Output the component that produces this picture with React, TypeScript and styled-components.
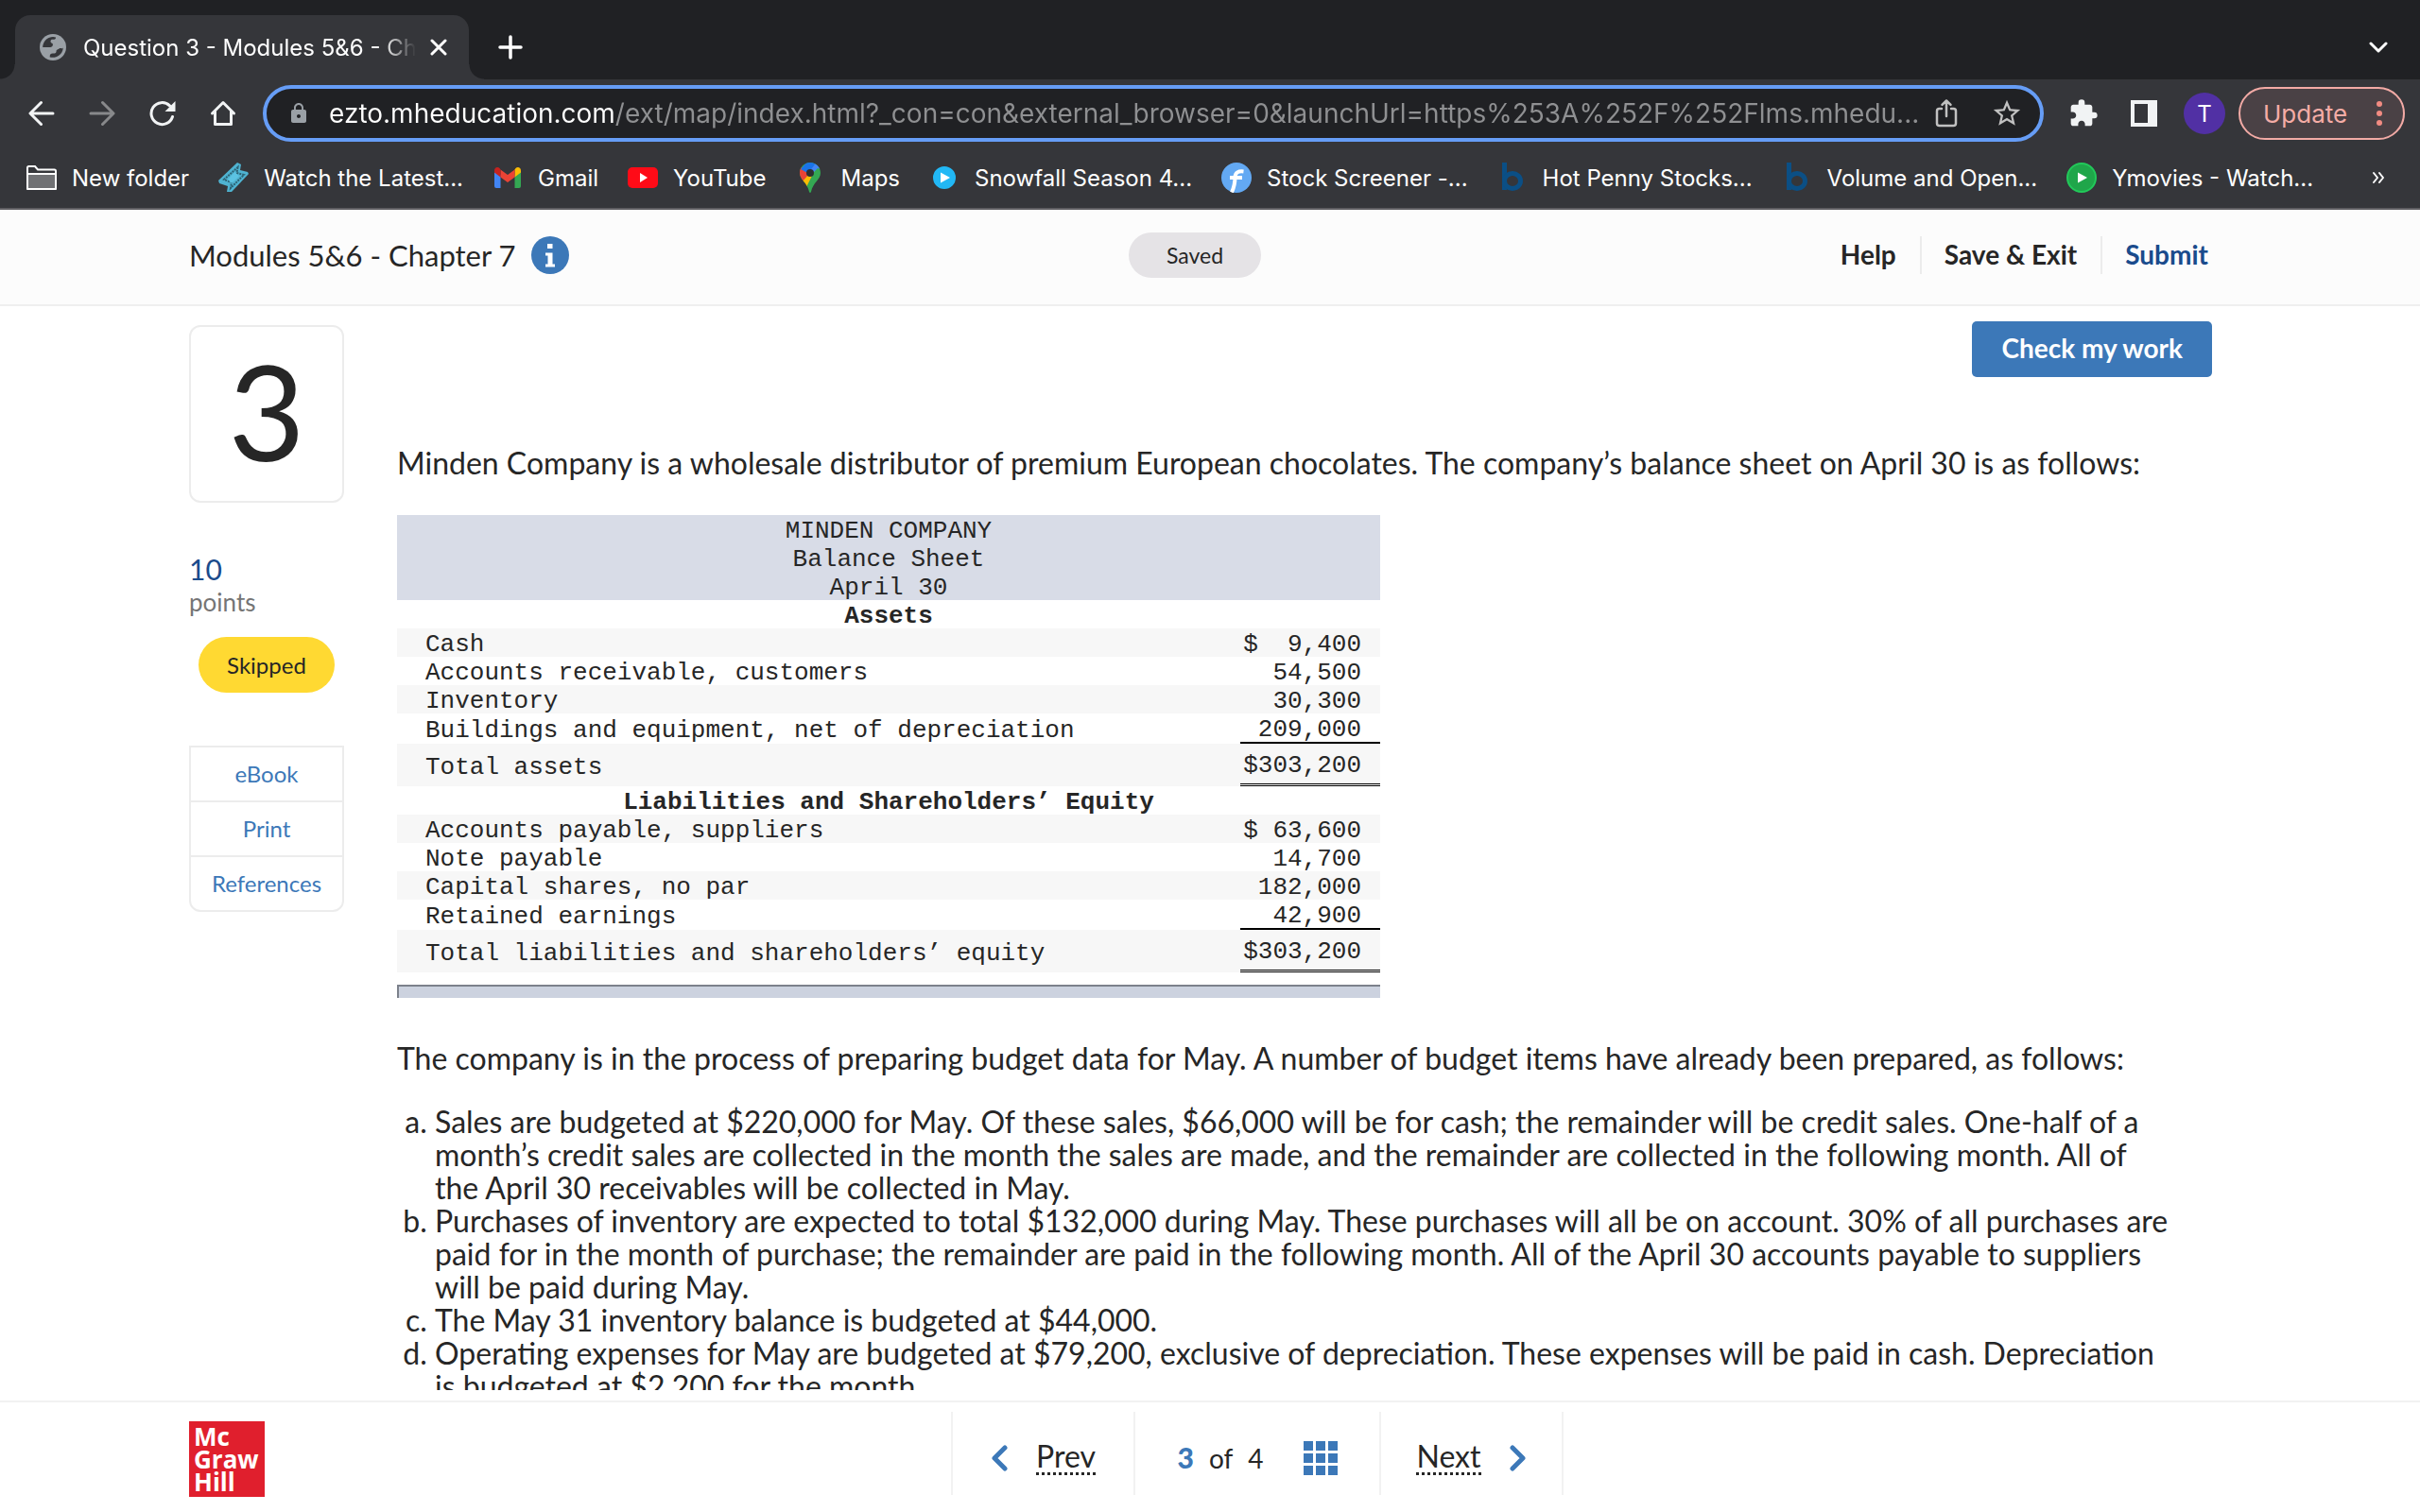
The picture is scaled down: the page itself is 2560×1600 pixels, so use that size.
import React from 'react';
import styled, { createGlobalStyle } from 'styled-components';
import { MdExtension, MdLock, MdStarBorder } from 'react-icons/md';

const UI_FONT = `Inter, 'Liberation Sans', sans-serif`;
const BODY_FONT = `Lato, 'Open Sans', sans-serif`;
const MONO_FONT = `'Liberation Mono', monospace`;

const color = {
  strip: '#202124',
  toolbar: '#35363a',
  ink: '#262626',
  blue: '#3c78b8',
  navy: '#1a4b8c',
  line: '#ececec',
};

const GlobalStyle = createGlobalStyle`
  * { box-sizing: border-box; }
  body { margin: 0; background: #fff; }
  button, input { font: inherit; color: inherit; border: 0; padding: 0; background: none; cursor: pointer; }
  a { color: inherit; text-decoration: none; }
  svg { display: block; flex: none; }
`;

const Page = styled.div`
  display: flex;
  flex-direction: column;
  height: 100vh;
  overflow: hidden;
  font-family: ${BODY_FONT};
  color: ${color.ink};
`;

/* ---------- browser chrome ---------- */

const Chrome = styled.header`
  flex: none;
  font-family: ${UI_FONT};
  font-size: 24px;
  color: #fff;
  background: ${color.toolbar};
  border-bottom: 2px solid #5f5e62;
`;

const TabStrip = styled.div`
  display: flex;
  align-items: flex-end;
  height: 84px;
  padding: 0 24px 0 16px;
  background: ${color.strip};
`;

const Tab = styled.div`
  position: relative;
  display: flex;
  align-items: center;
  width: 480px;
  height: 68px;
  padding: 0 23px 0 26px;
  border-radius: 16px 16px 0 0;
  background: ${color.toolbar};
  &::before,
  &::after {
    content: '';
    position: absolute;
    bottom: 0;
    width: 16px;
    height: 16px;
  }
  &::before {
    left: -16px;
    background: radial-gradient(circle at 0 0, transparent 15px, ${color.toolbar} 16px);
  }
  &::after {
    right: -16px;
    background: radial-gradient(circle at 100% 0, transparent 15px, ${color.toolbar} 16px);
  }
`;

const TabTitle = styled.span`
  flex: 1;
  margin: 0 15px 0 18px;
  overflow: hidden;
  white-space: nowrap;
  mask-image: linear-gradient(to right, #000 90%, transparent 100%);
`;

const StripButton = styled.button`
  display: flex;
  align-items: center;
  justify-content: center;
  height: 68px;
  width: ${(p) => p.$width}px;
`;

const Spacer = styled.div`
  flex: 1;
`;

const Toolbar = styled.div`
  display: flex;
  align-items: center;
  height: 72px;
  padding: 0 16px 0 20px;
`;

const NavButtons = styled.nav`
  display: flex;
  gap: 16px;
  margin-right: 18px;
`;

const IconButton = styled.button`
  display: flex;
  align-items: center;
  justify-content: center;
  width: 48px;
  height: 48px;
  color: ${(p) => (p.$muted ? '#88898b' : '#f1f3f4')};
`;

const AddressBar = styled.div`
  display: flex;
  flex: 1;
  align-items: center;
  gap: 8px;
  height: 60px;
  padding: 0 18px 0 22px;
  border: 4px solid #669df6;
  border-radius: 30px;
  background: ${color.strip};
  color: #9aa0a6;
`;

const Address = styled.input`
  flex: 1;
  min-width: 0;
  height: 40px;
  margin-left: 12px;
  font-size: 28px;
  color: transparent;
  background: linear-gradient(to right, #fff 303px, #8f9092 303px);
  background-clip: text;
  -webkit-background-clip: text;
  outline: none;
  cursor: text;
`;

const AddressActions = styled.div`
  display: flex;
  gap: 30px;
  color: #c1c1c1;
`;

const SmallButton = styled.button`
  display: flex;
  align-items: center;
  justify-content: center;
  width: 34px;
  height: 40px;
`;

const Extensions = styled.div`
  display: flex;
  align-items: center;
  gap: 16px;
  margin: 0 14px 0 18px;
`;

const Avatar = styled.button`
  width: 44px;
  height: 44px;
  margin-left: 2px;
  border-radius: 50%;
  background: #5130a4;
  text-align: center;
`;

const UpdateButton = styled.button`
  display: flex;
  align-items: center;
  justify-content: space-between;
  width: 176px;
  height: 56px;
  padding: 0 22px 0 24px;
  border: 2px solid #f2aaa5;
  border-radius: 28px;
  background: #4a4145;
  font-size: 26px;
  color: #f5aca6;
`;

const Bookmarks = styled.nav`
  display: flex;
  align-items: center;
  gap: 31px;
  height: 64px;
  padding: 0 38px 0 28px;
`;

const Bookmark = styled.a`
  display: flex;
  align-items: center;
  gap: 16px;
  white-space: nowrap;
`;

/* ---------- assignment header ---------- */

const Header = styled.header`
  display: grid;
  flex: none;
  grid-template-columns: 1fr auto 1fr;
  align-items: center;
  height: 102px;
  padding: 0 224px 5px 200px;
  border-bottom: 2px solid #efefef;
  background: #fcfcfc;
`;

const Title = styled.h1`
  display: flex;
  align-items: center;
  gap: 16px;
  margin: 0;
  font-size: 31px;
  font-weight: 400;
`;

const Saved = styled.span`
  width: 140px;
  margin-right: 8px;
  border-radius: 24px;
  background: #e5e3e6;
  font-size: 23px;
  line-height: 48px;
  text-align: center;
`;

const HeaderLinks = styled.nav`
  display: flex;
  justify-content: flex-end;
`;

const HeaderButton = styled.button`
  height: 40px;
  padding-bottom: 2px;
  font-size: 28px;
  font-weight: 700;
  color: ${(p) => (p.$accent ? color.navy : color.ink)};
  & + & {
    margin-left: 25px;
    padding-left: 24px;
    border-left: 2px solid ${color.line};
  }
`;

/* ---------- question ---------- */

const Main = styled.main`
  display: flex;
  flex: 1;
  gap: 56px;
  min-height: 0;
  margin-bottom: 11px;
  padding: 0 220px 0 200px;
  overflow: hidden;
`;

const Side = styled.aside`
  flex: none;
  width: 164px;
  padding-top: 20px;
`;

const QuestionNumber = styled.div`
  height: 188px;
  border: 2px solid ${color.line};
  border-radius: 12px;
  font-size: 140px;
  line-height: 176px;
  text-align: center;
`;

const Points = styled.div`
  margin-top: 53px;
  font-size: 30px;
  line-height: 35px;
  color: ${color.navy};
`;

const PointsLabel = styled.div`
  font-size: 26px;
  line-height: 35px;
  color: #757575;
`;

const Skipped = styled.div`
  width: 144px;
  margin: 19px auto 0;
  border-radius: 30px;
  background: #ffd932;
  font-size: 24px;
  line-height: 59px;
  text-align: center;
`;

const Resources = styled.nav`
  margin-top: 56px;
  border: 2px solid ${color.line};
  border-radius: 0 0 12px 12px;
`;

const Resource = styled.a`
  display: block;
  font-size: 24px;
  line-height: 56px;
  text-align: center;
  color: ${color.blue};
  & + & {
    border-top: 2px solid ${color.line};
  }
`;

const Content = styled.section`
  display: flex;
  flex: 1;
  flex-direction: column;
  min-width: 0;
  padding-top: 16px;
`;

const CheckButton = styled.button`
  align-self: flex-end;
  flex: none;
  height: 59px;
  padding: 0 31px 4px;
  border-radius: 5px;
  background: ${color.blue};
  font-size: 28px;
  font-weight: 700;
  color: #fff;
`;

const Text = styled.p`
  margin: ${(p) => p.$top}px 0 0;
  font-size: 32px;
  line-height: 35px;
`;

const Sheet = styled.table`
  width: 1040px;
  max-width: 100%;
  margin-top: 38px;
  border-spacing: 0;
  font-family: ${MONO_FONT};
  font-size: 26px;
  line-height: 26px;
  th,
  td {
    padding: 4px 0 0;
  }
`;

const SheetTitle = styled.th`
  background: #d8dce7;
  font-weight: 400;
`;

const SheetRow = styled.tr`
  background: ${(p) => (p.$shaded ? '#f7f7f7' : '#fff')};
`;

const Label = styled.th`
  && {
    padding-left: 30px;
  }
  font-weight: 400;
  text-align: left;
`;

const Amount = styled.td`
  && {
    padding: ${(p) => (p.$rule === 'double' ? '10px 20px 6px 0' : '4px 20px 0 0')};
  }
  width: 148px;
  border-bottom: ${(p) =>
    p.$rule === 'double' ? '3px double #000' : p.$rule === 'single' ? '2px solid #000' : '0'};
  text-align: right;
  white-space: pre;
`;

const SheetEnd = styled.div`
  flex: none;
  width: 1040px;
  max-width: 100%;
  height: 14px;
  margin-top: 13px;
  border-top: 2px solid #7c818b;
  border-left: 2px solid #7c818b;
  background: #ccd2df;
`;

const Items = styled.ol`
  margin: 32px 42px 0 0;
  padding-left: 40px;
  list-style: lower-alpha;
  font-size: 32px;
  line-height: 35px;
`;

/* ---------- footer ---------- */

const Footer = styled.footer`
  display: grid;
  flex: none;
  grid-template-columns: 1fr auto 1fr;
  align-items: start;
  height: 118px;
  padding: 10px 100px 0 200px;
  border-top: 2px solid #f2f2f2;
`;

const Logo = styled.div`
  width: 80px;
  height: 80px;
  margin-top: 10px;
  padding: 4px 0 0 5px;
  background: #e01f2d;
  font-family: 'Open Sans', sans-serif;
  font-size: 26px;
  font-weight: 700;
  line-height: 24px;
  color: #fff;
`;

const Pager = styled.nav`
  display: flex;
  height: 88px;
  border-right: 2px solid #f2f2f2;
  font-size: 32px;
`;

const PagerCell = styled.div`
  display: flex;
  align-items: center;
  justify-content: center;
  gap: ${(p) => (p.$wide ? 42 : 28)}px;
  width: ${(p) => (p.$wide ? 260 : 193)}px;
  padding-top: 9px;
  border-left: 2px solid #f2f2f2;
`;

const PagerButton = styled.button`
  display: flex;
  align-items: center;
  gap: 30px;
  color: ${color.blue};
`;

const PagerText = styled.span`
  border-bottom: 3px dotted ${color.ink};
  line-height: 34px;
  color: ${color.ink};
`;

const Position = styled.span`
  display: flex;
  gap: 16px;
  align-items: baseline;
  padding-bottom: 2px;
  font-size: 28px;
  b {
    font-size: 30px;
    font-weight: 900;
    color: ${color.blue};
  }
`;

/* ---------- icons ---------- */

const GlobeIcon = () => (
  <svg width="28" height="28" viewBox="0 0 28 28">
    <circle cx="14" cy="14" r="14" fill="#9aa0a6" />
    <path d="M17 3.4C17 6 15.6 5.4 13 5.8C11 6.4 11.2 9 12.5 9.6C14 10.2 14.2 11 13.6 12.4C13 13.8 11.5 14 10 14H3.2A10.9 10.9 0 0 1 17 3.4Z" fill={color.toolbar} />
    <path d="M24.8 14.5A10.9 10.9 0 0 1 10.8 24.4C10.4 22 11.5 20.5 14 20.6C17 20.6 17.6 19.6 17.6 18C17.8 16 19.5 17 20.5 15.6C21.5 14.2 23.5 16.5 24.8 14.5Z" fill={color.toolbar} />
  </svg>
);

const Stroke = ({ size, d, w = 3, h = size }: any) => (
  <svg width={size} height={h} viewBox={`0 0 ${size} ${h}`} fill="none" stroke="currentColor" strokeWidth={w} strokeLinecap="round" strokeLinejoin="round">
    <path d={d} />
  </svg>
);

const ReloadIcon = () => (
  <svg width="28" height="28" viewBox="0 0 28 28">
    <path d="M24.5 17.5A11.5 11.5 0 1 1 21.5 5.8" fill="none" stroke="currentColor" strokeWidth="3" strokeLinecap="round" />
    <path d="M27.5 1V12H16.5Z" fill="currentColor" />
  </svg>
);

const HomeIcon = () => (
  <svg width="28" height="28" viewBox="0 0 28 28" fill="none" stroke="currentColor" strokeWidth="3" strokeLinejoin="round" strokeLinecap="round">
    <path d="M2.5 14L14 2.5L25.5 14M5.5 12V25.5H22.5V12" />
  </svg>
);

const ShareIcon = () => (
  <svg width="24" height="32" viewBox="0 0 24 32" fill="none" stroke="currentColor" strokeWidth="2.5" strokeLinecap="round" strokeLinejoin="round">
    <path d="M7 11H4.5A2.5 2.5 0 0 0 2 13.5V26.5A2.5 2.5 0 0 0 4.5 29H19.5A2.5 2.5 0 0 0 22 26.5V13.5A2.5 2.5 0 0 0 19.5 11H17M12 19V3M7.5 6.8L12 2.5L16.5 6.8" />
  </svg>
);

const PanelIcon = () => (
  <svg width="28" height="28" viewBox="0 0 28 28">
    <path fillRule="evenodd" d="M0 0H28V28H0ZM4 4V24H18V4Z" fill="currentColor" />
  </svg>
);

const DotsIcon = () => (
  <svg width="6" height="28" viewBox="0 0 6 28" fill="#f28b82">
    <circle cx="3" cy="4" r="3" />
    <circle cx="3" cy="14" r="3" />
    <circle cx="3" cy="24" r="3" />
  </svg>
);

const FolderIcon = () => (
  <svg width="32" height="32" viewBox="0 0 32 32">
    <path d="M1 5.5Q1 4 2.5 4H9L12 7.5H29.5Q31 7.5 31 9V26.5Q31 28 29.5 28H2.5Q1 28 1 26.5Z" fill={color.toolbar} stroke="#fff" strokeWidth="2" />
    <path d="M1 12H31V28H1Z" fill="#707174" stroke="#fff" strokeWidth="2" strokeLinejoin="round" />
  </svg>
);

const TicketIcon = () => (
  <svg width="32" height="32" viewBox="0 0 32 32">
    <path d="M20 0L24 2L23 8L31 10L32 12L14 31L9 31L10 25L1 22L0 19Z" fill="#4fb3d1" />
    <path d="M20.5 5L19.5 11L27 13L13 27L14 21L6 18Z" fill="none" stroke="#2c6375" strokeWidth="2" strokeDasharray="2 1" />
    <path d="M17.5 10L22 14.5L14 22L10 18Z" fill="#5cc3e2" />
  </svg>
);

const GmailIcon = () => (
  <svg width="32" height="32" viewBox="0 0 32 32">
    <path d="M2 9V25Q2 27 4 27H8.5V13Z" fill="#4285f4" />
    <path d="M23.5 13V27H28Q30 27 30 25V9Z" fill="#34a853" />
    <path d="M23.5 7.5V15.5L30 10.5V8.5C30 5 26.5 4 24.5 6Z" fill="#fbbc04" />
    <path d="M8.5 15.5V7.5L16 13L23.5 7.5V15.5L16 21Z" fill="#ea4335" />
    <path d="M2 8.5V10.5L8.5 15.5V7.5L7.5 6C5.5 4 2 5 2 8.5Z" fill="#c5221f" />
  </svg>
);

const YouTubeIcon = () => (
  <svg width="32" height="32" viewBox="0 0 32 32">
    <rect x="0" y="5" width="32" height="22" rx="5" fill="#ff0b17" />
    <path d="M13 11V21L21 16Z" fill="#fff" />
  </svg>
);

const MapsIcon = () => (
  <svg width="32" height="32" viewBox="0 0 32 32">
    <defs>
      <clipPath id="pin">
        <path d="M16 0C9.5 0 5 5 5 11C5 18 13 21 15 31Q16 33 17 31C19 21 27 18 27 11C27 5 22.5 0 16 0Z" />
      </clipPath>
    </defs>
    <g clipPath="url(#pin)">
      <rect width="32" height="32" fill="#34a853" />
      <path d="M0 23L16 11L24 2L12 26Z" fill="#fbbc04" />
      <path d="M3 3L16 11L7 21L0 18Z" fill="#ea4335" />
      <path d="M6 7L12 0H20L22 3L15 12Z" fill="#1a73e8" />
      <path d="M20 0L30 8L24 6L15 15L14 11L21 2Z" fill="#4285f4" />
    </g>
    <circle cx="16" cy="11" r="4" fill="#2d2e31" />
  </svg>
);

const PlayIcon = ({ fill, ring, r }: any) => (
  <svg width="32" height="32" viewBox="0 0 32 32">
    <circle cx="16" cy="16" r={r} fill={fill} stroke={ring} strokeWidth="2" />
    <path d="M12 10.5V21.5L22 16Z" fill="#fff" strokeLinejoin="round" />
  </svg>
);

const FinvizIcon = () => (
  <svg width="32" height="32" viewBox="0 0 32 32">
    <circle cx="16" cy="16" r="16" fill="#63a9f3" />
    <path d="M9 16H22M11 31.5Q14.5 24 14.5 15Q15 8.5 23.5 9.5" fill="none" stroke="#fff" strokeWidth="4" />
  </svg>
);

const BarchartIcon = () => (
  <svg width="32" height="32" viewBox="0 0 32 32" fill="none" stroke="#0b4f85" strokeWidth="5">
    <path d="M7.5 0V29" />
    <ellipse cx="16" cy="19.5" rx="8.5" ry="8" />
  </svg>
);

const InfoIcon = () => (
  <svg width="40" height="40" viewBox="0 0 40 40">
    <circle cx="20" cy="20" r="20" fill={color.blue} />
    <path d="M17 8H22.5V13H17ZM15 17.5H22.5V29.5H25V32.5H15V29.5H17.5V20.5H15Z" fill="#fff" />
  </svg>
);

const GridIcon = () => (
  <svg width="36" height="36" viewBox="0 0 36 36" fill={color.blue}>
    {[0, 13, 26].map((y) => [0, 13, 26].map((x) => <rect key={`${x}-${y}`} x={x} y={y} width="10" height="10" />))}
  </svg>
);

/* ---------- data ---------- */

const bookmarks = [
  { label: 'New folder', icon: <FolderIcon /> },
  { label: 'Watch the Latest...', icon: <TicketIcon /> },
  { label: 'Gmail', icon: <GmailIcon /> },
  { label: 'YouTube', icon: <YouTubeIcon /> },
  { label: 'Maps', icon: <MapsIcon /> },
  { label: 'Snowfall Season 4...', icon: <PlayIcon fill="#22b8f5" ring="#22b8f5" r={11} /> },
  { label: 'Stock Screener -...', icon: <FinvizIcon /> },
  { label: 'Hot Penny Stocks...', icon: <BarchartIcon /> },
  { label: 'Volume and Open...', icon: <BarchartIcon /> },
  { label: 'Ymovies - Watch...', icon: <PlayIcon fill="#1fa64a" ring="#22c95a" r={15} /> },
];

const sections = [
  {
    heading: 'Assets',
    rows: [
      ['Cash', '$  9,400'],
      ['Accounts receivable, customers', '54,500'],
      ['Inventory', '30,300'],
      ['Buildings and equipment, net of depreciation', '209,000', 'single'],
      ['Total assets', '$303,200', 'double'],
    ],
  },
  {
    heading: 'Liabilities and Shareholders’ Equity',
    rows: [
      ['Accounts payable, suppliers', '$ 63,600'],
      ['Note payable', '14,700'],
      ['Capital shares, no par', '182,000'],
      ['Retained earnings', '42,900', 'single'],
      ['Total liabilities and shareholders’ equity', '$303,200', 'double'],
    ],
  },
];

const items = [
  'Sales are budgeted at $220,000 for May. Of these sales, $66,000 will be for cash; the remainder will be credit sales. One-half of a month’s credit sales are collected in the month the sales are made, and the remainder are collected in the following month. All of the April 30 receivables will be collected in May.',
  'Purchases of inventory are expected to total $132,000 during May. These purchases will all be on account. 30% of all purchases are paid for in the month of purchase; the remainder are paid in the following month. All of the April 30 accounts payable to suppliers will be paid during May.',
  'The May 31 inventory balance is budgeted at $44,000.',
  'Operating expenses for May are budgeted at $79,200, exclusive of depreciation. These expenses will be paid in cash. Depreciation is budgeted at $2,200 for the month.',
];

const url =
  'ezto.mheducation.com/ext/map/index.html?_con=con&external_browser=0&launchUrl=https%253A%252F%252Flms.mhedu...';

export default function App() {
  return (
    <Page>
      <GlobalStyle />
      <Chrome>
        <TabStrip>
          <Tab>
            <GlobeIcon />
            <TabTitle>Question 3 - Modules 5&6 - Chapter 7</TabTitle>
            <button aria-label="Close tab">
              <Stroke size={18} d="M2 2L16 16M16 2L2 16" />
            </button>
          </Tab>
          <StripButton $width={88} aria-label="New tab">
            <Stroke size={26} d="M13 2V24M2 13H24" w={3.5} />
          </StripButton>
          <Spacer />
          <StripButton $width={40} aria-label="Search tabs">
            <Stroke size={20} h={12} d="M2 2L10 10L18 2" />
          </StripButton>
        </TabStrip>
        <Toolbar>
          <NavButtons>
            <IconButton aria-label="Back">
              <Stroke size={28} d="M26 14H2.5M13.5 2.5L2 14L13.5 25.5" />
            </IconButton>
            <IconButton aria-label="Forward" $muted>
              <Stroke size={28} d="M2 14H25.5M14.5 2.5L26 14L14.5 25.5" />
            </IconButton>
            <IconButton aria-label="Reload">
              <ReloadIcon />
            </IconButton>
            <IconButton aria-label="Home">
              <HomeIcon />
            </IconButton>
          </NavButtons>
          <AddressBar>
            <MdLock size={24} />
            <Address aria-label="Address" defaultValue={url} spellCheck={false} />
            <AddressActions>
              <SmallButton aria-label="Share">
                <ShareIcon />
              </SmallButton>
              <SmallButton aria-label="Bookmark this page">
                <MdStarBorder size={34} />
              </SmallButton>
            </AddressActions>
          </AddressBar>
          <Extensions>
            <IconButton aria-label="Extensions">
              <MdExtension size={32} />
            </IconButton>
            <IconButton aria-label="Side panel">
              <PanelIcon />
            </IconButton>
            <Avatar aria-label="Profile">T</Avatar>
          </Extensions>
          <UpdateButton>
            Update
            <DotsIcon />
          </UpdateButton>
        </Toolbar>
        <Bookmarks>
          {bookmarks.map((b) => (
            <Bookmark key={b.label} href="#">
              {b.icon}
              {b.label}
            </Bookmark>
          ))}
          <Spacer />
          <button aria-label="More bookmarks">
            <Stroke size={14} h={14} d="M2 2L6 7L2 12M8 2L12 7L8 12" w={2} />
          </button>
        </Bookmarks>
      </Chrome>

      <Header>
        <Title>
          Modules 5&6 - Chapter 7
          <InfoIcon />
        </Title>
        <Saved>Saved</Saved>
        <HeaderLinks>
          <HeaderButton>Help</HeaderButton>
          <HeaderButton>Save & Exit</HeaderButton>
          <HeaderButton $accent>Submit</HeaderButton>
        </HeaderLinks>
      </Header>

      <Main>
        <Side>
          <QuestionNumber>3</QuestionNumber>
          <Points>10</Points>
          <PointsLabel>points</PointsLabel>
          <Skipped>Skipped</Skipped>
          <Resources>
            <Resource href="#">eBook</Resource>
            <Resource href="#">Print</Resource>
            <Resource href="#">References</Resource>
          </Resources>
        </Side>
        <Content>
          <CheckButton>Check my work</CheckButton>
          <Text $top={73}>
            Minden Company is a wholesale distributor of premium European chocolates. The company’s balance sheet on
            April 30 is as follows:
          </Text>
          <Sheet>
            <thead>
              {['MINDEN COMPANY', 'Balance Sheet', 'April 30'].map((t) => (
                <tr key={t}>
                  <SheetTitle colSpan={2}>{t}</SheetTitle>
                </tr>
              ))}
            </thead>
            {sections.map((s) => (
              <tbody key={s.heading}>
                <tr>
                  <th colSpan={2}>{s.heading}</th>
                </tr>
                {s.rows.map(([label, amount, rule], i) => (
                  <SheetRow key={label} $shaded={i % 2 === 0}>
                    <Label scope="row">{label}</Label>
                    <Amount $rule={rule}>{amount}</Amount>
                  </SheetRow>
                ))}
              </tbody>
            ))}
          </Sheet>
          <SheetEnd />
          <Text $top={46}>
            The company is in the process of preparing budget data for May. A number of budget items have already been
            prepared, as follows:
          </Text>
          <Items>
            {items.map((t) => (
              <li key={t}>{t}</li>
            ))}
          </Items>
        </Content>
      </Main>

      <Footer>
        <Logo>
          Mc
          <br />
          Graw
          <br />
          Hill
        </Logo>
        <Pager>
          <PagerCell>
            <PagerButton>
              <Stroke size={18} h={28} d="M15 3L4 14L15 25" w={5} />
              <PagerText>Prev</PagerText>
            </PagerButton>
          </PagerCell>
          <PagerCell $wide>
            <Position>
              <b>3</b>
              <span>of</span>
              <span>4</span>
            </Position>
            <button aria-label="All questions">
              <GridIcon />
            </button>
          </PagerCell>
          <PagerCell>
            <PagerButton>
              <PagerText>Next</PagerText>
              <Stroke size={18} h={28} d="M3 3L14 14L3 25" w={5} />
            </PagerButton>
          </PagerCell>
        </Pager>
      </Footer>
    </Page>
  );
}
